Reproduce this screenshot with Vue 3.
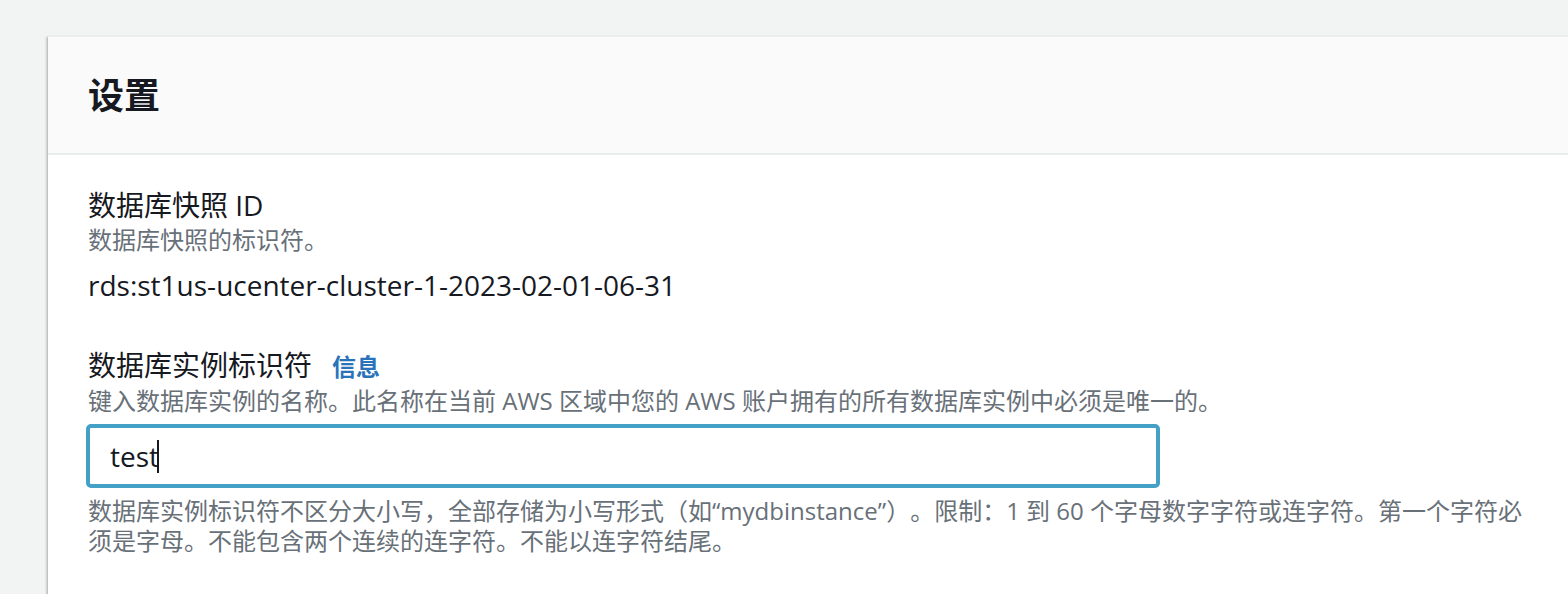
<script setup>
import { ref, onMounted } from 'vue'

const identifier = ref('test')
const field = ref(null)

onMounted(() => field.value.focus())
</script>

<template>
  <main class="page">
    <section class="panel" aria-labelledby="settings-title">
      <header class="panel-header">
        <h2 id="settings-title">设置</h2>
      </header>
      <div class="panel-body">
        <div class="group">
          <h3 class="label">数据库快照 ID</h3>
          <p class="hint">数据库快照的标识符。</p>
          <p class="value">rds:st1us-ucenter-cluster-1-2023-02-01-06-31</p>
        </div>
        <div class="group">
          <div class="label-row">
            <label class="label" for="identifier">数据库实例标识符</label>
            <a class="info" href="#info">信息</a>
          </div>
          <p id="identifier-hint" class="hint">键入数据库实例的名称。此名称在当前 AWS 区域中您的 AWS 账户拥有的所有数据库实例中必须是唯一的。</p>
          <div class="field">
            <input id="identifier" ref="field" v-model="identifier" type="text" aria-describedby="identifier-hint identifier-rules" />
            <span class="caret" aria-hidden="true"></span>
          </div>
          <p id="identifier-rules" class="hint">数据库实例标识符不区分大小写，全部存储为小写形式（如“mydbinstance”）。限制：1 到 60 个字母数字字符或连字符。第一个字符必须是字母。不能包含两个连续的连字符。不能以连字符结尾。</p>
        </div>
      </div>
    </section>
  </main>
</template>

<style>
body {
  background: #f2f3f3;
}
</style>

<style scoped>
.page {
  box-sizing: border-box;
  min-height: 100vh;
  display: flex;
  padding: 35px 0 0 48px;
  overflow: hidden;
  font-family: "Open Sans", "Noto Sans CJK SC", sans-serif;
  color: #16191f;
  text-spacing-trim: space-all;
}

.panel {
  flex: 1;
  background: #fff;
  border-top: 2px solid #eaeded;
  box-shadow:
    0 2px 2px 0 rgba(0, 28, 36, 0.3),
    2px 2px 2px 0 rgba(0, 28, 36, 0.15),
    -2px 2px 2px 0 rgba(0, 28, 36, 0.15);
}

.panel-header {
  padding: 35px 40px 33px;
  background: #fafafa;
  border-bottom: 2px solid #eaeded;
}

h2,
h3,
p {
  margin: 0;
}

h2 {
  font-size: 36px;
  line-height: 48px;
  font-weight: 700;
}

.panel-body {
  display: grid;
  gap: 40px;
  padding: 30px 40px;
}

.label,
.value {
  font-size: 28px;
  line-height: 40px;
  font-weight: 400;
}

.hint {
  font-size: 24px;
  line-height: 30px;
  color: #687078;
}

.value {
  margin-top: 10px;
  font-weight: 500;
}

.label-row {
  display: flex;
  align-items: baseline;
  gap: 20px;
  margin-bottom: 1px;
}

.info {
  font-size: 24px;
  line-height: 32px;
  font-weight: 700;
  color: #2a73bb;
  text-decoration: none;
}

.field {
  position: relative;
  max-width: 1074px;
  margin: 8px -2px;
}

input {
  box-sizing: border-box;
  display: block;
  width: 100%;
  height: 64px;
  padding: 0 20px;
  border: 4px solid #44a0c4;
  border-radius: 5px;
  outline: none;
  font: inherit;
  font-size: 28px;
  font-weight: 500;
  color: inherit;
  caret-color: transparent;
}

.caret {
  position: absolute;
  left: 71px;
  top: 16px;
  width: 2px;
  height: 33px;
  background: #16191f;
}
</style>
